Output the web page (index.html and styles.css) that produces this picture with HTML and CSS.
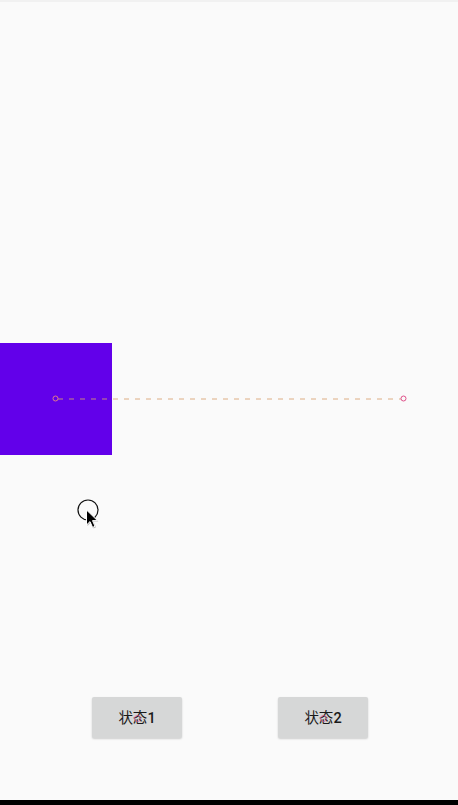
FILE: index.html
```html
<!DOCTYPE html>
<html lang="zh">
<head>
<meta charset="utf-8">
<title>状态</title>
<link rel="stylesheet" href="styles.css">
</head>
<body>
<div class="topline"></div>
<main class="stage">
  <div class="square"></div>
  <svg class="path-overlay" width="458" height="695" viewBox="0 0 458 695">
    <line x1="58" y1="397" x2="401" y2="397" class="dash"/>
    <circle cx="55.5" cy="396.5" r="2.5" class="dot-start"/>
    <circle cx="403.5" cy="396.5" r="2.5" class="dot-end"/>
  </svg>
  <svg class="cursor" width="40" height="40" viewBox="0 0 40 40">
    <circle cx="14" cy="14" r="10" class="ring"/>
    <path d="M13.5 15 L13.5 30 L17 26.6 L19.6 32.4 L22 31.3 L19.5 25.6 L24.4 25.6 Z" class="arrow-shadow"/>
    <path d="M12.5 14 L12.5 29 L16 25.6 L18.6 31.4 L21 30.3 L18.5 24.6 L23.4 24.6 Z" class="arrow"/>
  </svg>
</main>
<div class="actions">
  <button class="btn">状态<span class="num">1</span><span class="touch"></span></button>
  <button class="btn">状态<span class="num">2</span><span class="touch"></span></button>
</div>
<div class="navbar"></div>
</body>
</html>
```
FILE: styles.css
```css
html, body {
  margin: 0;
  padding: 0;
}
body {
  width: 458px;
  height: 805px;
  display: flex;
  flex-direction: column;
  background: #fafafa;
  font-family: Roboto, "Noto Sans CJK SC", sans-serif;
  overflow: hidden;
}
.topline {
  height: 2px;
  background: #f1f1f1;
}
.stage {
  flex: 1;
  position: relative;
}
.square {
  margin-top: 341px;
  width: 112px;
  height: 112px;
  background: #6200ea;
}
.path-overlay {
  position: absolute;
  left: 0;
  top: 0;
}
.dash {
  stroke: #d8a070;
  stroke-opacity: 0.85;
  stroke-width: 1;
  stroke-dasharray: 5 6;
}
.dot-start {
  fill: none;
  stroke: #e07a8a;
  stroke-width: 1;
}
.dot-end {
  fill: none;
  stroke: #e0508a;
  stroke-width: 1;
}
.cursor {
  position: absolute;
  left: 74px;
  top: 494px;
}
.ring {
  fill: none;
  stroke: #111;
  stroke-width: 1.2;
}
.arrow-shadow {
  fill: rgba(0,0,0,0.25);
}
.arrow {
  fill: #000;
  stroke: #fff;
  stroke-width: 1;
  stroke-linejoin: round;
}
.actions {
  display: flex;
  gap: 96px;
  padding-left: 92px;
  padding-bottom: 62px;
}
.btn {
  position: relative;
  width: 90px;
  height: 41px;
  border: none;
  border-radius: 2px;
  background: #d6d7d7;
  box-shadow: 0 1px 2px rgba(0,0,0,0.18);
  font-family: Roboto, "Noto Sans CJK SC", sans-serif;
  font-size: 14.5px;
  font-weight: 400;
  line-height: 20px;
  color: #1a1a1a;
  padding: 3px 0 0;
}
.num {
  font-weight: 500;
}
.touch {
  position: absolute;
  left: 42px;
  top: 18px;
  width: 5px;
  height: 5px;
  border: 1px solid rgba(224, 80, 138, 0.7);
  border-radius: 50%;
}
.navbar {
  height: 5px;
  background: #000;
}
```
